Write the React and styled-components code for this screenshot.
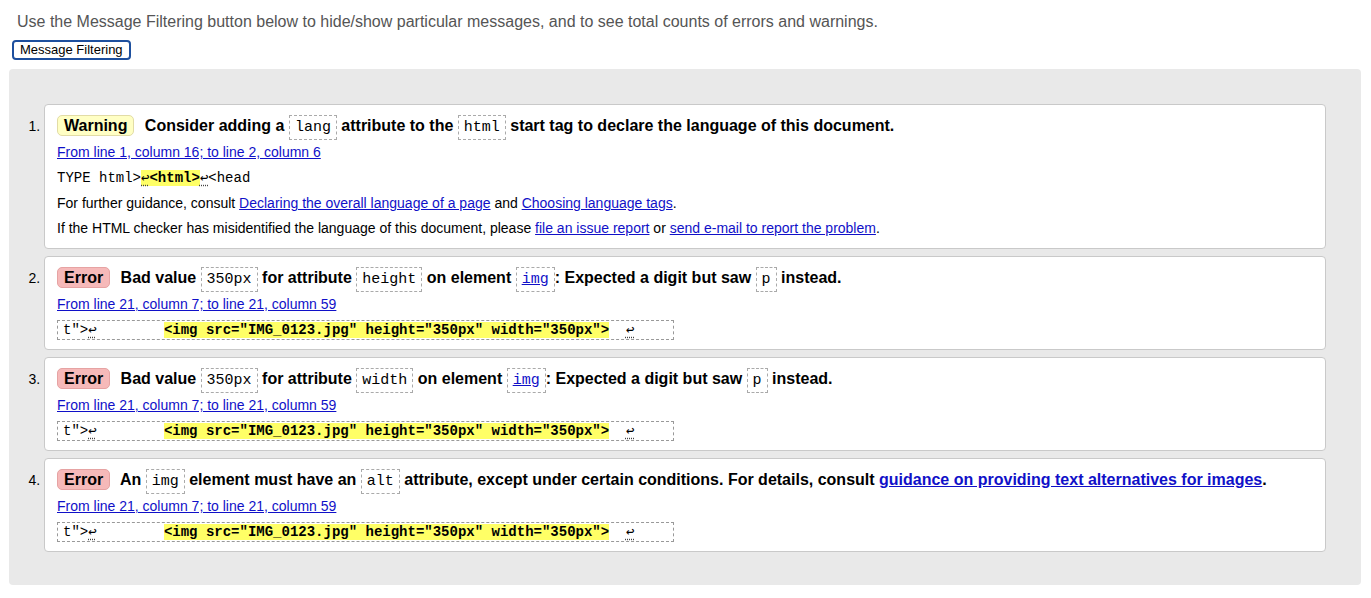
import React from 'react';
import styled, { createGlobalStyle, css } from 'styled-components';

const GlobalStyle = createGlobalStyle`
    body {
        margin: 0;
        background: #fff;
        font-family: "Liberation Sans", Arial, sans-serif;
        color: #000;
    }
`;

const Page = styled.div`
    padding: 0 10px 13px 9px;
`;

const Intro = styled.p`
    margin: 12px 0 0 8px;
    font-size: 16px;
    line-height: 20px;
    color: #555;
`;

const FilterButton = styled.button`
    display: block;
    margin: 8px 0 0 3px;
    height: 20px;
    padding: 0 6px;
    font-family: "Liberation Sans", Arial, sans-serif;
    font-size: 13px;
    line-height: 16px;
    color: #000;
    background: #fff;
    border: 2px solid #1d4f9e;
    border-radius: 4px;
`;

const Results = styled.ol`
    margin: 9px 0 0;
    padding: 35px 35px 26px;
    background: #e9e9e9;
    border-radius: 4px;
`;

const Message = styled.li`
    margin: 0 0 7px;
    padding: 8px 12px 7px;
    font-size: 14px;
    background: #fff;
    border: 1px solid #c9c9c9;
    border-radius: 4px;

    &::marker {
        font-size: 14px;
    }
`;

const Title = styled.p`
    margin: 0;
    font-size: 16px;
    font-weight: bold;
    line-height: 25px;
`;

const badgeColors = {
    warning: css`
        background: #ffffc4;
        border-color: #e2dca6;
    `,
    error: css`
        background: #f6b9b9;
        border-color: #e6a3a3;
    `,
};

const Badge = styled.span`
    display: inline-block;
    margin-right: 6px;
    padding: 0 6px;
    line-height: 19px;
    border: 1px solid;
    border-radius: 5px;
    ${({ $kind }) => badgeColors[$kind]}
`;

const Code = styled.code`
    padding: 3px 5px;
    font-family: "Liberation Mono", "Courier New", monospace;
    font-size: 15px;
    font-weight: normal;
    border: 1px dashed #aaa;
`;

const CodeLink = styled(Code).attrs({ as: 'a', href: '#' })`
    color: #1010c8;
    text-decoration: underline;
`;

const Location = styled.p`
    margin: 0;
    line-height: 25px;
`;

const Link = styled.a.attrs({ href: '#' })`
    color: #1010c8;
    text-decoration: underline;
`;

const Extract = styled.p`
    margin: 0;
    line-height: 25px;

    code {
        font-family: "Liberation Mono", "DejaVu Sans Mono", monospace;
        font-size: 14px;
        white-space: pre;
        ${({ $boxed }) =>
            $boxed &&
            css`
                display: inline-block;
                vertical-align: middle;
                line-height: 16px;
                padding: 1px 5px;
                border: 1px dashed #999;
            `}
    }
`;

const Mark = styled.b`
    background: #ffff66;
`;

const LineBreak = styled.span`
    text-decoration: underline dotted #444;
    text-underline-offset: 3px;
    font-weight: normal;
`;

const Note = styled.p`
    margin: 0;
    line-height: 25px;
`;

const ImgExtract = () => (
    <Extract $boxed>
        <code>
            t"&gt;<LineBreak>↩</LineBreak>{'        '}
            <Mark>{'<img src="IMG_0123.jpg" height="350px" width="350px">'}</Mark>
            {'  '}<LineBreak>↩</LineBreak>{'    '}
        </code>
    </Extract>
);

const Where = () => <Location><Link>From line 21, column 7; to line 21, column 59</Link></Location>;

const App = () => (
    <Page>
        <GlobalStyle />
        <Intro>Use the Message Filtering button below to hide/show particular messages, and to see total counts of errors and warnings.</Intro>
        <FilterButton>Message Filtering</FilterButton>
        <Results>
            <Message>
                <Title>
                    <Badge $kind="warning">Warning</Badge> Consider adding a <Code>lang</Code> attribute to the <Code>html</Code> start tag to declare the language of this document.
                </Title>
                <Location><Link>From line 1, column 16; to line 2, column 6</Link></Location>
                <Extract>
                    <code>
                        TYPE html&gt;<Mark><LineBreak>↩</LineBreak>&lt;html&gt;</Mark><LineBreak>↩</LineBreak>&lt;head
                    </code>
                </Extract>
                <Note>
                    For further guidance, consult <Link>Declaring the overall language of a page</Link> and <Link>Choosing language tags</Link>.
                </Note>
                <Note>
                    If the HTML checker has misidentified the language of this document, please <Link>file an issue report</Link> or <Link>send e-mail to report the problem</Link>.
                </Note>
            </Message>
            <Message>
                <Title>
                    <Badge $kind="error">Error</Badge> Bad value <Code>350px</Code> for attribute <Code>height</Code> on element <CodeLink>img</CodeLink>: Expected a digit but saw <Code>p</Code> instead.
                </Title>
                <Where />
                <ImgExtract />
            </Message>
            <Message>
                <Title>
                    <Badge $kind="error">Error</Badge> Bad value <Code>350px</Code> for attribute <Code>width</Code> on element <CodeLink>img</CodeLink>: Expected a digit but saw <Code>p</Code> instead.
                </Title>
                <Where />
                <ImgExtract />
            </Message>
            <Message>
                <Title>
                    <Badge $kind="error">Error</Badge> An <Code>img</Code> element must have an <Code>alt</Code> attribute, except under certain conditions. For details, consult <Link>guidance on providing text alternatives for images</Link>.
                </Title>
                <Where />
                <ImgExtract />
            </Message>
        </Results>
    </Page>
);

export default App;
